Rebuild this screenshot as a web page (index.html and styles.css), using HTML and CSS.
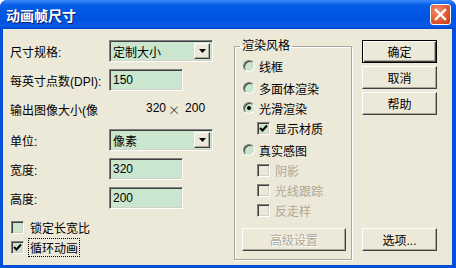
FILE: index.html
```html
<html>
<head>
  <meta charset="utf-8">
  <title>动画帧尺寸</title>
  <link rel="stylesheet" href="styles.css">
</head>
<body>
  <div class="window">
    <div class="titlebar">
      <span class="title">动画帧尺寸</span>
      <span class="close">
        <svg width="19" height="19" viewBox="0 0 19 19"><path d="M5 5 L14 14 M14 5 L5 14" stroke="#fff" stroke-width="2.4" stroke-linecap="square"/></svg>
      </span>
    </div>
    <div class="client">
      <div class="form">
        <div class="row">
          <span class="label">尺寸规格:</span>
          <div class="select"><span class="value">定制大小</span><span class="drop"><svg width="7" height="4" viewBox="0 0 7 4"><path d="M0 0 H7 L3.5 4 Z" fill="#000"/></svg></span></div>
        </div>
        <div class="row">
          <span class="label">每英寸点数(DPI):</span>
          <div class="input">150</div>
        </div>
        <div class="row">
          <span class="label">输出图像大小(像</span>
          <span class="size"><span>320</span><span class="times">×</span><span>200</span></span>
        </div>
        <div class="row row-unit">
          <span class="label">单位:</span>
          <div class="select"><span class="value">像素</span><span class="drop"><svg width="7" height="4" viewBox="0 0 7 4"><path d="M0 0 H7 L3.5 4 Z" fill="#000"/></svg></span></div>
        </div>
        <div class="row">
          <span class="label">宽度:</span>
          <div class="input">320</div>
        </div>
        <div class="row">
          <span class="label">高度:</span>
          <div class="input">200</div>
        </div>
        <div class="check check-first">
          <span class="box"></span>
          <span class="text">锁定长宽比</span>
        </div>
        <div class="check">
          <span class="box"><svg width="9" height="9" viewBox="0 0 9 9"><path d="M1 4 L3.5 6.5 L8 1.5" stroke="#000" stroke-width="2" fill="none"/></svg></span>
          <span class="text focus">循环动画</span>
        </div>
      </div>

      <fieldset class="group">
        <legend>渲染风格</legend>
        <div class="opt"><span class="radio"></span>线框</div>
        <div class="opt opt-gap"><span class="radio"></span>多面体渲染</div>
        <div class="opt"><span class="radio on"></span>光滑渲染</div>
        <div class="opt sub"><span class="box"><svg width="9" height="9" viewBox="0 0 9 9"><path d="M1 4 L3.5 6.5 L8 1.5" stroke="#000" stroke-width="2" fill="none"/></svg></span>显示材质</div>
        <div class="opt opt-gap"><span class="radio"></span>真实感图</div>
        <div class="opt sub disabled"><span class="box"></span>阴影</div>
        <div class="opt sub disabled"><span class="box"></span>光线跟踪</div>
        <div class="opt sub disabled"><span class="box"></span>反走样</div>
        <div class="btn wide disabled">高级设置</div>
      </fieldset>

      <div class="buttons">
        <div class="btn default">确定</div>
        <div class="btn">取消</div>
        <div class="btn">帮助</div>
        <div class="spacer"></div>
        <div class="btn">选项...</div>
      </div>
    </div>
  </div>
</body>
</html>
```

FILE: styles.css
```css
* { box-sizing: border-box; }
body {
  margin: 0;
  background: #fff;
  font: 12px "Liberation Sans", "Noto Sans CJK SC", sans-serif;
  color: #000;
}
.window {
  width: 456px;
  height: 268px;
  background: #0550d8;
  border-radius: 7px 7px 0 0;
  display: flex;
  flex-direction: column;
  overflow: hidden;
}
.titlebar {
  height: 29px;
  flex: none;
  display: flex;
  align-items: center;
  justify-content: space-between;
  padding: 0 5px 0 6px;
  background: linear-gradient(to bottom, #3a8cf9 0%, #2a7cf5 6%, #0a5fe6 16%, #0057e4 40%, #0054e0 70%, #0a5ae8 90%, #0046c8 100%);
}
.title {
  color: #fff;
  font-weight: bold;
  font-size: 14px;
  text-shadow: 1px 1px 0 #0a1e6a;
}
.close {
  width: 21px;
  height: 21px;
  border: 1px solid #fff;
  border-radius: 3px;
  background: radial-gradient(circle at 35% 30%, #f0906e 0%, #e05a32 55%, #c5391a 100%);
  display: flex;
  align-items: center;
  justify-content: center;
}
.client {
  flex: 1;
  margin: 0 4px 3px 3px;
  background: #ece9d8;
  display: flex;
  align-items: flex-start;
}

/* left side */
.form {
  width: 231px;
  padding: 11px 0 0 7px;
  display: flex;
  flex-direction: column;
}
.row {
  height: 22px;
  margin-top: 7px;
  display: flex;
  align-items: center;
}
.row:first-child { margin-top: 0; }
.row-unit { margin-top: 9px; }
.label { width: 99px; flex: none; }
.select, .input {
  height: 22px;
  background: #cae6ce;
  border: 1px solid;
  border-color: #808080 #fff #fff #808080;
  box-shadow: inset 1px 1px 0 #404040, inset -1px -1px 0 #d4d0c8;
  display: flex;
  align-items: center;
}
.select {
  width: 104px;
  padding: 2px 2px 2px 2px;
  justify-content: space-between;
}
.select .value { padding-left: 1px; }
.drop {
  width: 16px;
  height: 16px;
  background: #ece9d8;
  border: 1px solid;
  border-color: #fff #404040 #404040 #fff;
  box-shadow: inset -1px -1px 0 #aca899;
  display: flex;
  align-items: center;
  justify-content: center;
}
.input {
  width: 74px;
  padding-left: 3px;
}
.size { padding-left: 37px; display: flex; }
.times { font-family: "Noto Sans CJK SC", sans-serif; margin: 0 5px 0 2px; font-weight: 300; }

.check {
  height: 16px;
  margin-top: 4px;
  display: flex;
  align-items: center;
  padding-left: 1px;
}
.check-first { margin-top: 10px; }
.box {
  width: 13px;
  height: 13px;
  flex: none;
  background: #cae6ce;
  border: 1px solid;
  border-color: #808080 #fff #fff #808080;
  box-shadow: inset 1px 1px 0 #404040, inset -1px -1px 0 #d4d0c8;
  display: flex;
  align-items: center;
  justify-content: center;
}
.check .text { margin-left: 4px; padding: 0 1px 0 1px; border: 1px solid transparent; }
.check .focus { border: 1px dotted #000; }

/* render style group */
.group {
  width: 118px;
  margin: 10px 0 0 0;
  padding: 3px 4px 8px 7px;
  border: 1px solid #aca899;
  box-shadow: inset 1px 1px 0 #fff, 1px 1px 0 #fff;
}
.group legend {
  padding: 0 2px;
  margin-left: -2px;
  line-height: 14px;
}
.opt {
  height: 20px;
  display: flex;
  align-items: center;
  padding-left: 1px;
}
.opt-gap { margin-top: 2px; }
.radio {
  width: 12px;
  height: 12px;
  margin-right: 4px;
  border-radius: 50%;
  background: #cae6ce;
  border: 1px solid;
  border-color: #808080 #fff #fff #808080;
  box-shadow: inset 1px 1px 0 #404040;
  display: flex;
  align-items: center;
  justify-content: center;
}
.radio.on::after {
  content: "";
  width: 4px;
  height: 4px;
  border-radius: 50%;
  background: #000;
}
.opt.sub { padding-left: 15px; }
.opt .box { margin-right: 5px; }
.opt.disabled { color: #aca899; }
.opt.disabled .box { background: #ece9d8; }

/* buttons */
.btn {
  width: 75px;
  height: 23px;
  background: #ece9d8;
  border: 1px solid;
  border-color: #fff #404040 #404040 #fff;
  box-shadow: inset -1px -1px 0 #aca899;
  display: flex;
  align-items: center;
  justify-content: center;
  margin-top: 3px;
}
.btn.default {
  border-color: #000;
  box-shadow: inset 1px 1px 0 #fff, inset -1px -1px 0 #404040, inset -2px -2px 0 #aca899;
}
.btn.wide { width: 104px; margin-top: 8px; }
.btn.disabled { color: #aca899; text-shadow: 1px 1px 0 #fff; }
.buttons {
  width: 75px;
  margin: 8px 0 0 10px;
  display: flex;
  flex-direction: column;
}
.spacer { height: 110px; }
```
